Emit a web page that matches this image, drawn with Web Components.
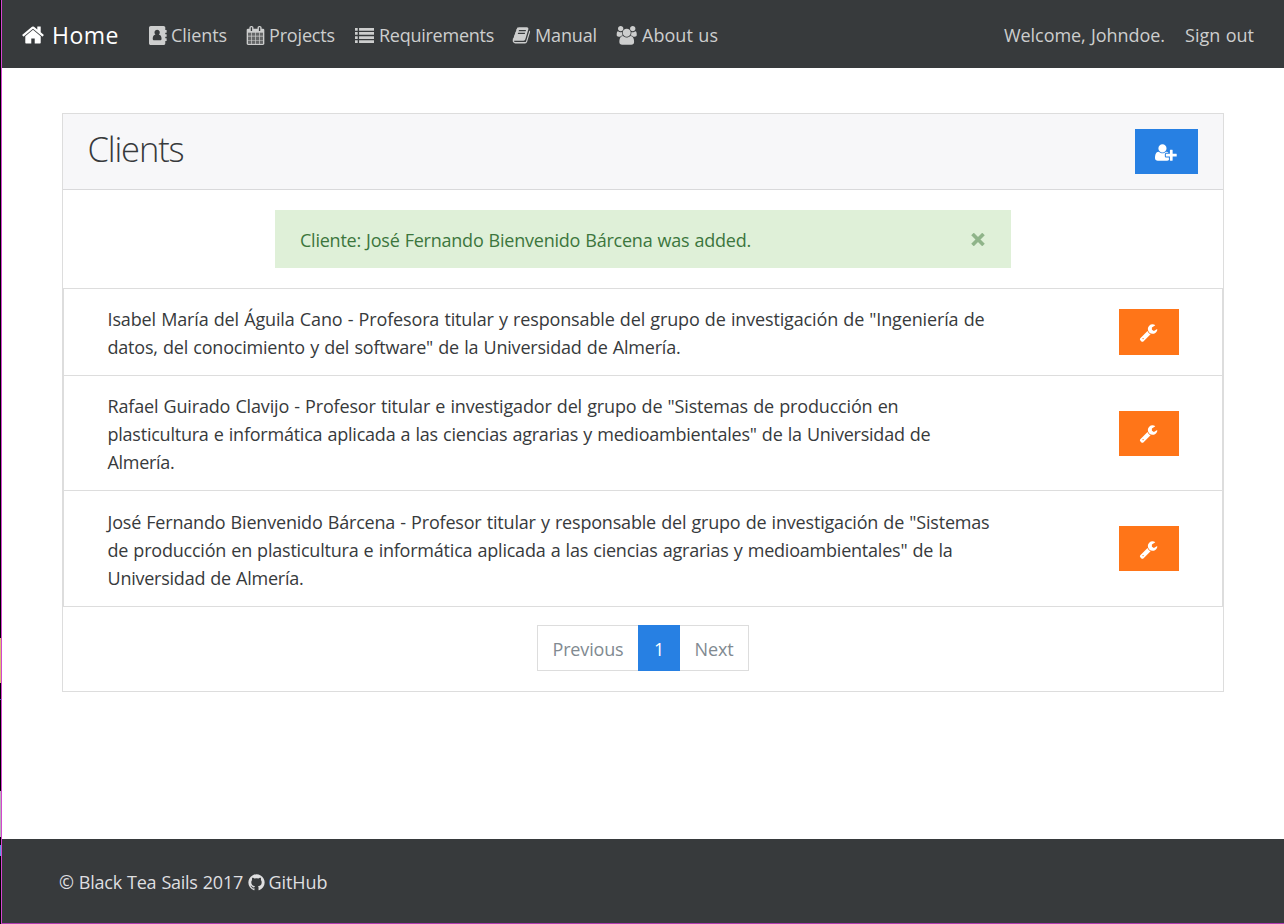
<!DOCTYPE html>
<html lang="en">
<head>
<meta charset="utf-8">
<title>Clients</title>
<style>
html,body{margin:0;height:100%}
body{font:18px/28.125px "Open Sans","Noto Sans",sans-serif;color:#373a3c;background:#fff;overflow:hidden}
</style>
</head>
<body>
<client-app></client-app>
<script>
const ICONS = {
home:[1792,'<path d="M1472 992v480q0 26-19 45t-45 19h-384v-384h-256v384h-384q-26 0-45-19t-19-45v-480q0-1 .5-3t.5-3l575-474 575 474q1 2 1 6zm223-69l-62 74q-8 9-21 11h-3q-13 0-21-7l-692-577-692 577q-12 8-24 7-13-2-21-11l-62-74q-8-10-7-23.5t11-21.5l719-599q32-26 76-26t76 26l244 204v-195q0-14 9-23t23-9h192q14 0 23 9t9 23v408l219 182q10 8 11 21.5t-7 23.5z"/>'],
address:[1792,'<path fill-rule="evenodd" d="M160 0h1216q66 0 113 47t47 113v224h110q18 0 18 18v220q0 18-18 18h-110v128h110q18 0 18 18v220q0 18-18 18h-110v128h110q18 0 18 18v220q0 18-18 18h-110v224q0 66-47 113t-113 47H160q-66 0-113-47T0 1632V160Q0 94 47 47T160 0zM768 352a254 254 0 0 0-160 452c-150 20-256 150-256 390 0 90 60 150 140 150h552c80 0 140-60 140-150 0-240-106-370-256-390A254 254 0 0 0 768 352z"/>'],
calendar:[1792,'<path opacity=".3" d="M192 640h1408v1024H192z"/><path d="M192 1664h288v-288h-288v288zm352 0h320v-288h-320v288zm-352-352h288v-320h-288v320zm352 0h320v-320h-320v320zm-352-384h288v-288h-288v288zm736 736h320v-288h-320v288zm-384-736h320v-288h-320v288zm768 736h288v-288h-288v288zm-384-352h320v-320h-320v320zm-352-864v-288q0-13-9.5-22.5t-22.5-9.5h-64q-13 0-22.5 9.5t-9.5 22.5v288q0 13 9.5 22.5t22.5 9.5h64q13 0 22.5-9.5t9.5-22.5zm736 864h288v-320h-288v320zm-384-384h320v-288h-320v288zm384 0h288v-288h-288v288zm32-480v-288q0-13-9.5-22.5t-22.5-9.5h-64q-13 0-22.5 9.5t-9.5 22.5v288q0 13 9.5 22.5t22.5 9.5h64q13 0 22.5-9.5t9.5-22.5zm384-64v1280q0 52-38 90t-90 38h-1408q-52 0-90-38t-38-90v-1280q0-52 38-90t90-38h128v-96q0-66 47-113t113-47h64q66 0 113 47t47 113v96h384v-96q0-66 47-113t113-47h64q66 0 113 47t47 113v96h128q52 0 90 38t38 90z"/>'],
list:[1792,'<path d="M0 192h256v256H0zM0 576h256v256H0zM0 960h256v256H0zM0 1344h256v256H0zM384 192h1408v256H384zM384 576h1408v256H384zM384 960h1408v256H384zM384 1344h1408v256H384z"/>'],
book:[1792,'<path d="M1703 478q40 57 18 129l-275 906q-19 64-76.5 107.5t-122.5 43.5h-923q-77 0-148.5-53.5t-99.5-131.5q-24-67-2-127 0-4 3-27t4-37q1-8-3-21.5t-3-19.5q2-11 8-21t16.5-23.5 16.5-23.5q23-38 45-91.5t30-91.5q3-10 .5-30t-.5-28q3-11 17-28t17-23q21-36 42-92t25-90q1-9-2.5-32t.5-28q4-13 22-30.5t22-22.5q19-26 42.5-84.5t27.5-96.5q1-8-3-25.5t-2-26.5q2-8 9-18t18-23 17-21q8-12 16.5-30.5t15-35 16-36 19.5-32 26.5-23.5 36-11.5 47.5 5.5l-1 3q38-9 51-9h761q74 0 114 56t18 130l-274 906q-36 119-71.5 153.5t-128.5 34.5h-869q-27 0-38 15-11 16-1 43 24 70 144 70h923q29 0 56-15.5t35-41.5l300-987q7-22 5-57 38 15 59 43zm-1064 2q-4 13 2 22.5t20 9.5h608q13 0 25.5-9.5t16.5-22.5l21-64q4-13-2-22.5t-20-9.5h-608q-13 0-25.5 9.5t-16.5 22.5zm-83 256q-4 13 2 22.5t20 9.5h608q13 0 25.5-9.5t16.5-22.5l21-64q4-13-2-22.5t-20-9.5h-608q-13 0-25.5 9.5t-16.5 22.5z"/>'],
users:[2048,'<path d="M657 896q-162 5-265 128h-134q-82 0-138-40.5t-56-118.5q0-353 124-353 6 0 43.5 21t97.5 42.5 119 21.5q67 0 133-23-5 37-5 66 0 139 81 256zm1071 637q0 120-73 189.5t-194 69.5h-874q-121 0-194-69.5t-73-189.5q0-53 3.5-103.5t14-109 26.5-108.5 43-97.5 62-81 85.5-53.5 111.5-20q10 0 43 21.5t73 48 107 48 135 21.5 135-21.5 107-48 73-48 43-21.5q61 0 111.5 20t85.5 53.5 62 81 43 97.5 26.5 108.5 14 109 3.5 103.5zm-1024-1277q0 106-75 181t-181 75-181-75-75-181 75-181 181-75 181 75 75 181zm704 384q0 159-112.5 271.5t-271.5 112.5-271.5-112.5-112.5-271.5 112.5-271.5 271.5-112.5 271.5 112.5 112.5 271.5zm576 225q0 78-56 118.5t-138 40.5h-134q-103-123-265-128 81-117 81-256 0-29-5-66 66 23 133 23 59 0 119-21.5t97.5-42.5 43.5-21q124 0 124 353zm-128-609q0 106-75 181t-181 75-181-75-75-181 75-181 181-75 181 75 75 181z"/>'],
userplus:[2048,'<path d="M704 896q-159 0-271.5-112.5t-112.5-271.5 112.5-271.5 271.5-112.5 271.5 112.5 112.5 271.5-112.5 271.5-271.5 112.5zm960 128h352q13 0 22.5 9.5t9.5 22.5v192q0 13-9.5 22.5t-22.5 9.5h-352v352q0 13-9.5 22.5t-22.5 9.5h-192q-13 0-22.5-9.5t-9.5-22.5v-352h-352q-13 0-22.5-9.5t-9.5-22.5v-192q0-13 9.5-22.5t22.5-9.5h352v-352q0-13 9.5-22.5t22.5-9.5h192q13 0 22.5 9.5t9.5 22.5v352zm-736 224q0 52 38 90t90 38h256v238q-68 50-171 50h-874q-121 0-194-69t-73-190q0-53 3.5-103.5t14-109 26.5-108.5 43-97.5 62-81 85.5-53.5 111.5-20q19 0 39 17 79 61 154.5 91.5t164.5 30.5 164.5-30.5 154.5-91.5q20-17 39-17 132 0 217 96h-223q-52 0-90 38t-38 90v192z"/>'],
wrench:[1792,'<path d="M448 1472q0-26-19-45t-45-19-45 19-19 45 19 45 45 19 45-19 19-45zm644-420l-682 682q-37 37-90 37-52 0-91-37l-106-108q-38-36-38-90 0-53 38-91l681-681q39 98 114.5 173.5t173.5 114.5zm634-435q0 39-23 106-47 134-164.5 217.5t-258.5 83.5q-185 0-316.5-131.5t-131.5-316.5 131.5-316.5 316.5-131.5q58 0 121.5 16.5t107.5 46.5q16 11 16 28t-16 28l-293 169v224l193 107q5-3 79-48.5t135.5-81 70.5-35.5q15 0 23.5 10t8.5 25z"/>'],
github:[1792,'<path d="M896 128q209 0 385.5 103t279.5 279.5 103 385.5q0 251-146.5 451.5t-378.5 277.5q-27 5-40-7t-13-30q0-3 .5-76.5t.5-134.5q0-97-52-142 57-6 102.5-18t94-39 81-66.5 53-105 20.5-150.5q0-119-79-206 37-91-8-204-28-9-81 11t-92 44l-38 24q-93-26-192-26t-192 26q-16-11-42.5-27t-83.5-38.5-85-13.5q-45 113-8 204-79 87-79 206 0 85 20.5 150t52.5 105 80.5 67 94 39 102.5 18q-39 36-49 103-21 10-45 15t-57 5-65.5-21.5-55.5-62.5q-19-32-48.5-52t-49.5-24l-20-3q-21 0-29 4.5t-5 11.5 9 14 13 12l7 5q22 10 43.5 38t31.5 51l10 23q13 38 44 61.5t67 30 69.5 7 55.5-3.5l23-4q0 38 .5 88.5t.5 54.5q0 18-13 30t-40 7q-232-77-378.5-277.5t-146.5-451.5q0-209 103-385.5t279.5-279.5 385.5-103z"/>']
};
const define = (name, html, after) => customElements.define(name, class extends HTMLElement {
  constructor(){ super(); this.attachShadow({mode:'open'}); }
  connectedCallback(){
    this.shadowRoot.innerHTML = html;
    if (after) after(this, this.shadowRoot);
  }
});

/* Glyph sized by its height in pixels; width follows the viewBox. */
define('fa-icon', '<style>:host{display:block;flex:none}svg{display:block;fill:currentColor;overflow:visible}</style><svg></svg>', (el, root) => {
  const [w, body] = ICONS[el.getAttribute('name')];
  const size = +el.getAttribute('size') || 19;
  const svg = root.querySelector('svg');
  svg.setAttribute('viewBox', `0 0 ${w} 1792`);
  svg.setAttribute('height', size);
  svg.setAttribute('width', size * w / 1792);
  svg.innerHTML = body;
});

/* One line of text, tracked so that it fills the width given in "w". */
define('text-run', '<style>:host{display:block;white-space:pre;flex:none}span{display:inline-block;word-spacing:.7px}</style><span><slot></slot></span>', (el, root) => {
  const span = root.querySelector('span'), w = +el.getAttribute('w');
  const n = el.textContent.length;
  span.style.letterSpacing = (w - span.getBoundingClientRect().width) / n + 'px';
  el.style.width = w + 'px';
});

define('nav-item', `<style>:host{display:flex;align-items:center;color:#cdcece;height:28px}
.i{width:var(--iw,19px);margin-right:var(--ig,4px);flex:none}</style><div class="i"><slot name="icon"></slot></div><slot></slot>`);

define('top-bar', `<style>:host{display:flex;align-items:center;box-sizing:border-box;height:68px;flex:none;background:#373a3c;padding:2px 30px 0 19px;color:#cdcece}
.brand{display:flex;align-items:center;color:#fff;font-size:23px;width:128px}
.brand fa-icon{margin-right:7px}.grow{flex:1}.out{margin-left:20px}
#c{--iw:19px;--ig:3px;width:97px}#p{--iw:19px;--ig:4px;width:109px}#r{--iw:20px;--ig:4px;width:157px}#m{--iw:19px;--ig:4px;width:104px}#a{--iw:21px;--ig:5px}
</style>
<div class="brand"><fa-icon name="home" size="24"></fa-icon><text-run w="67">Home</text-run></div>
<nav-item id="c"><fa-icon slot="icon" name="address" size="19"></fa-icon><text-run w="56">Clients</text-run></nav-item>
<nav-item id="p"><fa-icon slot="icon" name="calendar" size="19"></fa-icon><text-run w="66">Projects</text-run></nav-item>
<nav-item id="r"><fa-icon slot="icon" name="list" size="19"></fa-icon><text-run w="115">Requirements</text-run></nav-item>
<nav-item id="m"><fa-icon slot="icon" name="book" size="18.75"></fa-icon><text-run w="62">Manual</text-run></nav-item>
<nav-item id="a"><fa-icon slot="icon" name="users" size="18.75"></fa-icon><text-run w="76">About us</text-run></nav-item>
<div class="grow"></div><text-run w="161">Welcome, Johndoe.</text-run><text-run class="out" w="69">Sign out</text-run>`);

define('icon-button', `<style>:host{display:flex;align-items:center;justify-content:center;box-sizing:border-box;flex:none;width:var(--w,60px);height:var(--h,45px);background:var(--bg,#ff7518);color:#fff;padding:1px 1px 0 0}</style><slot></slot>`);

define('alert-box', `<style>:host{display:flex;align-items:center;box-sizing:border-box;height:58px;width:736px;margin:20px auto;padding:2px 26px 0 25px;background:#dff0d8;color:#3c763d;justify-content:space-between}
svg{display:block;margin-top:-2px}</style><slot></slot><svg width="14" height="13" viewBox="0 0 14 13"><path d="M1.5 1L12.5 12M12.5 1L1.5 12" stroke="#8fb489" stroke-width="3.6"/></svg>`);

define('client-row', `<style>:host{display:flex;align-items:center;box-sizing:border-box;height:var(--rh,115px);border:1px solid #ddd;border-top:0;padding:0 43px 0 43.5px;justify-content:space-between}
div{padding-top:2.4px}</style><div><slot></slot></div><icon-button><fa-icon name="wrench" size="19"></fa-icon></icon-button>`);

define('page-nav', `<style>:host{display:flex;justify-content:center;margin:18px 0 20px;color:#818a91}
div{box-sizing:border-box;height:46px;border:1px solid #ddd;padding:9px 0 0 14.5px}
.a{width:101px;border-right:0}.b{width:42px;padding-left:15px;background:#2780e3;border-color:#2780e3;color:#fff}.c{width:69px;border-left:0}</style>
<div class="a"><text-run w="71">Previous</text-run></div><div class="b"><text-run w="9">1</text-run></div><div class="c"><text-run w="39">Next</text-run></div>`);

define('client-card', `<style>:host{display:block;box-sizing:border-box;width:1162px;margin:45px 0 0 60px;border:1px solid #ddd}
header{display:flex;align-items:center;justify-content:space-between;box-sizing:border-box;height:76px;padding:0 25px 0 24.5px;background:#f7f7f9;border-bottom:1px solid #d9d9db}
header text-run{font-size:34.5px;font-weight:300;line-height:48px;margin-top:-5px}
.list{border-top:1px solid #ddd}</style>
<header><text-run w="96">Clients</text-run><icon-button style="--w:63px;--bg:#2780e3"><fa-icon name="userplus" size="19"></fa-icon></icon-button></header>
<alert-box><text-run w="451">Cliente: José Fernando Bienvenido Bárcena was added.</text-run></alert-box>
<div class="list">
<client-row style="--rh:87px;--h:46px"><text-run w="877">Isabel María del Águila Cano - Profesora titular y responsable del grupo de investigación de "Ingeniería de</text-run><text-run w="573">datos, del conocimiento y del software" de la Universidad de Almería.</text-run></client-row>
<client-row><text-run w="791">Rafael Guirado Clavijo - Profesor titular e investigador del grupo de "Sistemas de producción en</text-run><text-run w="823">plasticultura e informática aplicada a las ciencias agrarias y medioambientales" de la Universidad de</text-run><text-run w="67">Almería.</text-run></client-row>
<client-row style="--rh:116px"><text-run w="882">José Fernando Bienvenido Bárcena - Profesor titular y responsable del grupo de investigación de "Sistemas</text-run><text-run w="845">de producción en plasticultura e informática aplicada a las ciencias agrarias y medioambientales" de la</text-run><text-run w="196">Universidad de Almería.</text-run></client-row>
</div><page-nav></page-nav>`);

define('page-footer', `<style>:host{display:flex;align-items:center;box-sizing:border-box;height:84px;flex:none;margin-top:auto;background:#373a3c;color:#dfdfe0;padding:3px 0 0 57px}
fa-icon{margin:0 3px 0 3.5px}</style><text-run w="184">© Black Tea Sails 2017</text-run><fa-icon name="github" size="19"></fa-icon><text-run w="59">GitHub</text-run>`);

define('client-app', `<style>:host{display:flex;height:924px;width:1284px;box-sizing:border-box}
.edge{width:1px;flex:none;background:linear-gradient(#000 0 638px,#d9c074 638px 683px,#000 683px 699px,#4a63c0 699px 700px,#000 700px 791px,#b5b5b5 791px 837px,#000 837px 845px,#5a9ae0 845px 856px,#000 856px)}
main{display:flex;flex-direction:column;flex:1;box-sizing:border-box;border-left:1px solid #d445d0;border-bottom:1px solid #b03bb0}</style>
<div class="edge"></div><main><top-bar></top-bar><client-card></client-card><page-footer></page-footer></main>`);
</script>
</body>
</html>
